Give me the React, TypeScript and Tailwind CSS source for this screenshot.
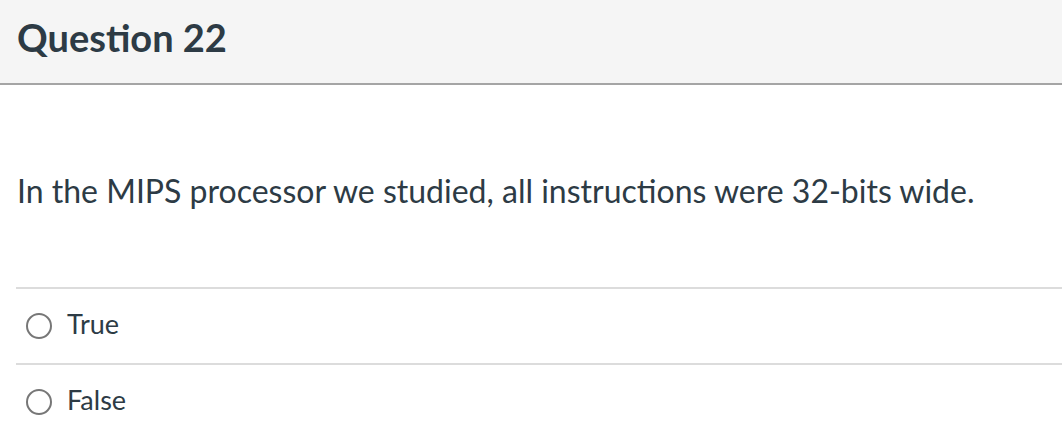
export default function App() {
  const answers = ["True", "False"];
  return (
    <div className="w-[1062px] h-[442px] bg-white overflow-hidden text-[#2d3b45]" style={{ fontFamily: "Lato, 'Open Sans', sans-serif" }}>
      <div className="h-[85px] bg-[#f5f5f5] border-b-2 border-[#a5a5a5] flex items-center px-[17px]">
        <h2 className="text-[38px] font-bold leading-none -mt-[10px]">Question 22</h2>
      </div>
      <div className="pt-[86px] px-[17px]">
        <p className="text-[32px] leading-[40px]">In the MIPS processor we studied, all instructions were 32-bits wide.</p>
      </div>
      <div className="mt-[76px] ml-[16px]">
        {answers.map((a) => (
          <div key={a} className="border-t-2 border-[#dcdcdc] h-[76px] flex items-center gap-[15px] pl-[10px]">
            <span className="w-[26px] h-[26px] rounded-full border-2 border-[#777] bg-white" />
            <span className="text-[27px] -mt-[3px]">{a}</span>
          </div>
        ))}
      </div>
    </div>
  );
}
